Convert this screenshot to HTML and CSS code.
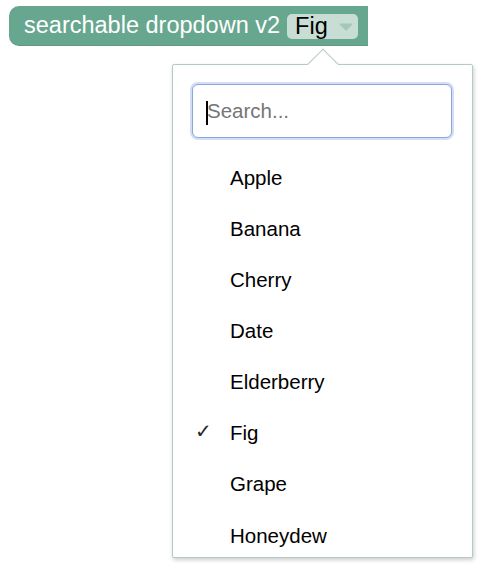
FILE: index.html
```html
<!DOCTYPE html>
<html>
<head>
<meta charset="utf-8">
<link rel="stylesheet" href="styles.css">
</head>
<body>
<div class="block">
  <span class="label">searchable dropdown v2</span>
  <span class="field"><span class="field-text">Fig</span><svg class="caret" width="14" height="8" viewBox="0 0 14 8"><path d="M1 1 L13 1 L7 7 Z" fill="#a3c8b8" stroke="#a3c8b8" stroke-width="1.2" stroke-linejoin="round"/></svg></span>
</div>
<div class="popup">
  <div class="notch"></div>
  <div class="popup-inner">
    <div class="search-wrap"><input class="search" type="text" placeholder="Search..."><span class="text-caret"></span></div>
    <ul class="list">
      <li class="item">Apple</li>
      <li class="item">Banana</li>
      <li class="item">Cherry</li>
      <li class="item">Date</li>
      <li class="item">Elderberry</li>
      <li class="item selected"><span class="check">✓</span>Fig</li>
      <li class="item">Grape</li>
      <li class="item">Honeydew</li>
    </ul>
  </div>
</div>
</body>
</html>
```
FILE: styles.css
```css
html, body {
  margin: 0;
  padding: 0;
  background: #ffffff;
  font-family: "Liberation Sans", Arial, sans-serif;
}
body {
  padding: 6px 0 0 9px;
  position: relative;
  width: 496px;
  height: 576px;
  box-sizing: border-box;
  overflow: hidden;
}
.block {
  display: flex;
  align-items: center;
  width: 359px;
  height: 40px;
  box-sizing: border-box;
  background: #67a78f;
  border-radius: 10px 0 0 10px;
  padding-left: 15px;
  color: #ffffff;
  font-size: 23.5px;
  box-shadow: inset 0 -1px 0 rgba(0,0,0,0.08);
}
.label {
  white-space: nowrap;
  line-height: 1;
}
.field {
  display: flex;
  align-items: center;
  margin-left: 7px;
  height: 25px;
  padding: 0 5px 0 8px;
  background: #c8ded4;
  border-radius: 5px;
  color: #000000;
}
.field-text {
  line-height: 1;
  margin-top: 1px;
}
.caret {
  margin-left: 11px;
  margin-top: 2px;
}
.popup {
  position: absolute;
  left: 172px;
  top: 64px;
  width: 301px;
  height: 494px;
  box-sizing: border-box;
  background: #ffffff;
  border: 1px solid #b3cbc1;
  border-radius: 2px;
  box-shadow: 1px 2px 4px rgba(0,0,0,0.2);
}
.notch {
  position: absolute;
  left: 139px;
  top: -12px;
  width: 21px;
  height: 21px;
  background: #ffffff;
  border-left: 1px solid #b3cbc1;
  border-top: 1px solid #b3cbc1;
  transform: rotate(45deg);
}
.popup-inner {
  position: relative;
  height: 100%;
  overflow: hidden;
}
.search-wrap {
  position: relative;
  padding: 19px 20px 0 19px;
}
.search {
  display: block;
  width: 100%;
  height: 54px;
  box-sizing: border-box;
  border: 1.5px solid #8aa6e0;
  border-radius: 6px;
  box-shadow: 0 0 0 2px #d3def6;
  outline: none;
  padding: 0 14px;
  font-family: "Liberation Sans", Arial, sans-serif;
  font-size: 20.5px;
  color: #000000;
}
.search::placeholder {
  color: #767676;
}
.text-caret {
  position: absolute;
  left: 33px;
  top: 36px;
  width: 2px;
  height: 24px;
  background: #000000;
}
.list {
  list-style: none;
  margin: 14px 0 0 0;
  padding: 0;
}
.item {
  position: relative;
  display: flex;
  align-items: center;
  height: 51.15px;
  padding-left: 57px;
  font-size: 20.5px;
  color: #000000;
}
.check {
  position: absolute;
  left: 22px;
  top: 13px;
  font-family: "DejaVu Sans", sans-serif;
  font-size: 20px;
  line-height: 1;
  color: #2a2a2a;
}
```
